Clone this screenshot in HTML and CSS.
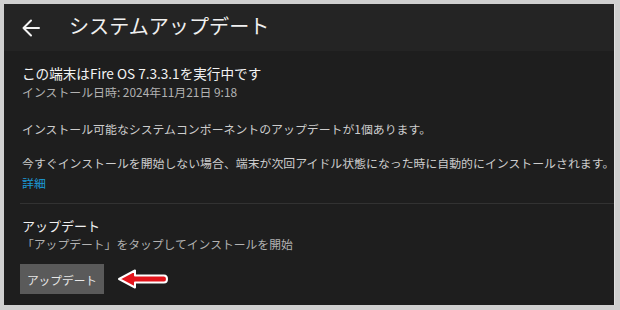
FILE: index.html
```html
<!DOCTYPE html>
<html lang="ja">
<head>
    <meta charset="UTF-8">
    <meta name="viewport" content="width=device-width, initial-scale=1.0">
    <title>システムアップデート</title>
    <link rel="stylesheet" href="styles.css">
</head>
<body>
<div class="screen">
    <div class="top-bar">
        <svg class="back-icon" width="18" height="18" viewBox="0 0 18 18"><path d="M17 9H1.5M9 1.5L1.5 9L9 16.5" fill="none" stroke="#f2f2f2" stroke-width="2" stroke-linecap="round" stroke-linejoin="round"/></svg>
        <p class="page-title">システムアップデート</p>
    </div>

    <div class="content">
        <p class="os-version">この端末はFire OS 7.3.3.1を実行中です</p>
        <p class="install-date">インストール日時: 2024年11月21日 9:18</p>

        <p class="info">インストール可能なシステムコンポーネントのアップデートが1個あります。</p>

        <p class="info later">今すぐインストールを開始しない場合、端末が次回アイドル状態になった時に自動的にインストールされます。<br><a class="details" href="#">詳細</a></p>
    </div>

    <div class="divider"></div>

    <div class="update-section">
        <p class="update-title">アップデート</p>
        <p class="update-hint">「アップデート」をタップしてインストールを開始</p>
        <div class="button-row">
            <button class="update-button">アップデート</button>
            <svg class="red-arrow" width="52" height="22" viewBox="0 0 52 22"><path d="M2 11L18 2.5V7.5H47Q50 7.5 50 11Q50 14.5 47 14.5H18V19.5Z" fill="#e3141b" stroke="#ffffff" stroke-width="2" stroke-linejoin="round"/></svg>
        </div>
    </div>
</div>
</body>
</html>
```

FILE: styles.css
```css
body
{
    margin:0;
    background-color:#d0d0d0;
    font-family:"Noto Sans CJK JP","Noto Sans",sans-serif;
}
p
{
    margin:0;
}
.screen
{
    margin:4px 0 0 4px;
    width:611px;
    height:301px;
    background-color:#1e1e1e;
    border-right:1px solid #e2e2e2;
    box-sizing:border-box;
    overflow:hidden;
}
.top-bar
{
    height:47px;
    background-color:#242424;
    display:flex;
    align-items:center;
    padding-left:18px;
}
.back-icon
{
    margin-top:1px;
}
.page-title
{
    color:#f0f0f0;
    font-size:20.1px;
    margin-left:29px;
    margin-top:-4px;
}
.content
{
    padding:12px 0 0 18px;
}
.os-version
{
    color:#f4f4f4;
    font-size:13.6px;
    line-height:20px;
}
.install-date
{
    color:#b2b2b2;
    font-size:11.9px;
    line-height:18px;
}
.info
{
    color:#cdcdcd;
    font-size:11.9px;
    line-height:18px;
    margin-top:19px;
    white-space:nowrap;
}
.later
{
    line-height:20px;
    margin-top:15px;
}
.details
{
    color:#1c9ad6;
    text-decoration:none;
}
.divider
{
    height:1px;
    background-color:#323232;
    margin:10px 0 0 16px;
}
.update-section
{
    padding:13px 0 0 18px;
}
.update-title
{
    color:#f0f0f0;
    font-size:13px;
    line-height:18px;
}
.update-hint
{
    color:#b2b2b2;
    font-size:11.8px;
    line-height:18px;
}
.button-row
{
    display:flex;
    align-items:center;
    margin-top:11px;
    margin-left:-2px;
}
.update-button
{
    background-color:#5a5a5a;
    color:#e8e8e8;
    border:none;
    height:30px;
    width:84px;
    font-family:"Noto Sans CJK JP",sans-serif;
    font-size:11.7px;
    padding:0;
}
.red-arrow
{
    margin-left:13px;
}
```
